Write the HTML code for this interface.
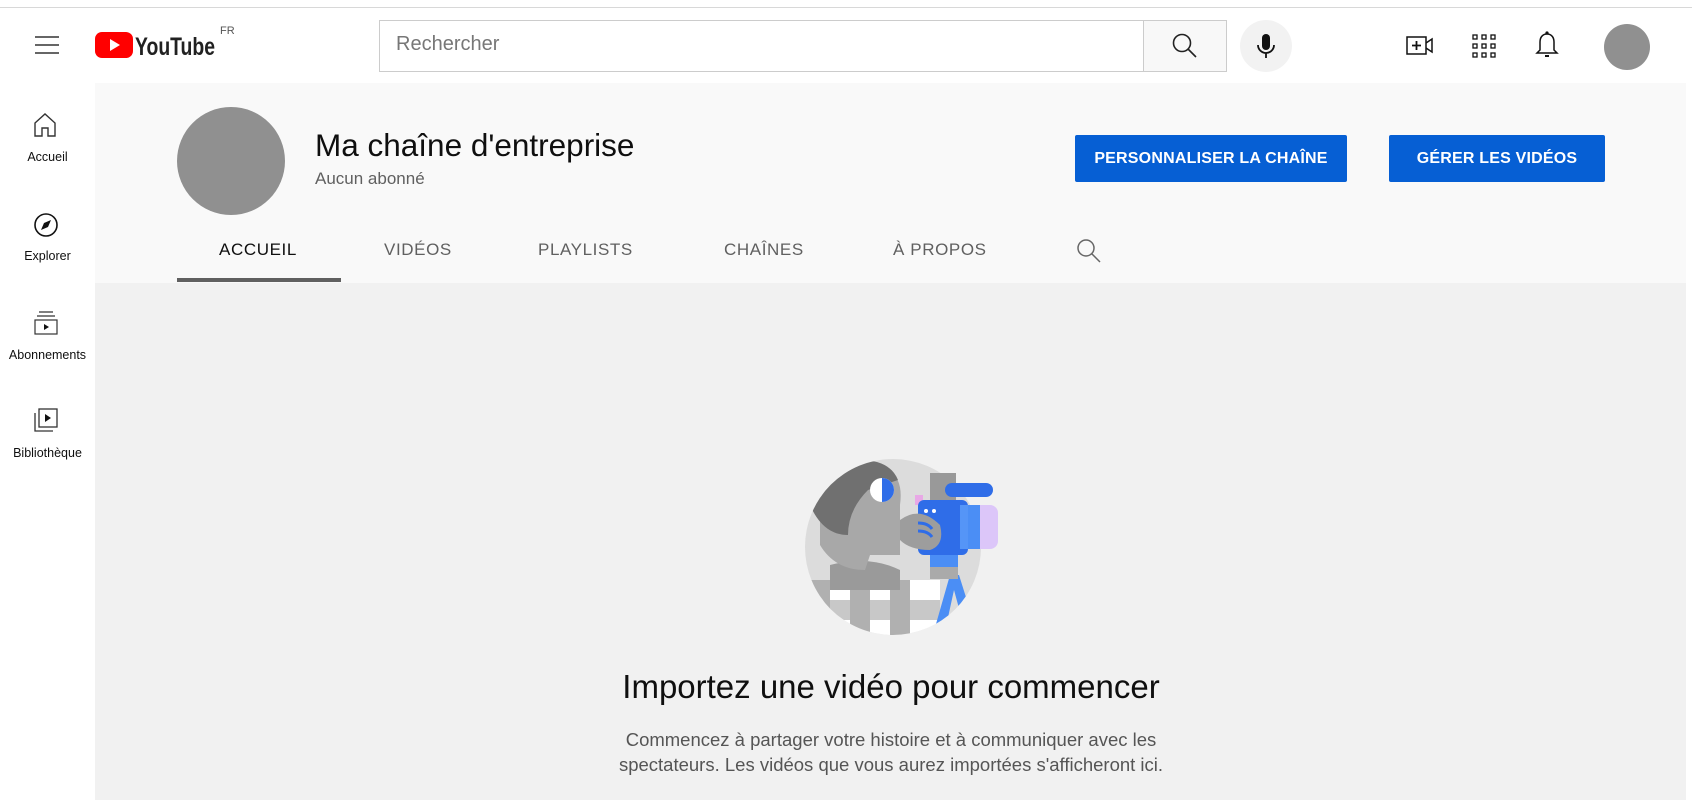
<!DOCTYPE html>
<html><head><meta charset="utf-8"><style>
*{margin:0;padding:0;box-sizing:border-box}
body{width:1692px;height:800px;overflow:hidden;background:#fff;font-family:"Liberation Sans",Arial,sans-serif;position:relative;color:#0f0f0f}
.abs{position:absolute}
.topline{left:0;top:7px;width:1692px;height:1px;background:#d8d8d8}
.main{left:95px;top:83px;width:1591px;height:717px;background:#f1f1f1}
.chead{left:95px;top:83px;width:1591px;height:200px;background:#f9f9f9}
.side{text-align:center;width:95px;left:0;font-size:12.5px;color:#0f0f0f}
.tab{top:240px;font-size:17px;letter-spacing:.6px;color:#606060;font-weight:500}
.btn{top:135px;height:47px;background:#065fd4;color:#fff;font-size:16px;font-weight:bold;letter-spacing:.2px;line-height:47px;text-align:center;border-radius:2px}
</style></head><body>
<div class="abs topline"></div>
<svg class="abs" style="left:34px;top:34px" width="26" height="22"><path d="M1 3h24M1 11h24M1 19h24" stroke="#333" stroke-width="1.6"/></svg>
<svg class="abs" style="left:95px;top:31px" width="125" height="28" viewBox="0 0 125 28">
<rect x="0" y="1" width="38" height="26" rx="7" fill="#f00"/>
<path d="M15 8v12l10-6z" fill="#fff"/>
<text x="40" y="24" font-family="Liberation Sans,sans-serif" font-size="25" font-weight="bold" textLength="80" lengthAdjust="spacingAndGlyphs" fill="#212121">YouTube</text>
</svg>
<div class="abs" style="left:220px;top:25px;font-size:11px;color:#555">FR</div>
<div class="abs" style="left:379px;top:20px;width:765px;height:52px;border:1px solid #ccc;border-right:none;background:#fff"></div>
<div class="abs" style="left:396px;top:33px;font-size:20px;color:#777">Rechercher</div>
<div class="abs" style="left:1143px;top:20px;width:84px;height:52px;border:1px solid #ccc;background:#f8f8f8"></div>
<svg class="abs" style="left:1171px;top:32px" width="28" height="28"><circle cx="11" cy="11" r="8.5" fill="none" stroke="#222" stroke-width="1.6"/><path d="M17 17l8 8" stroke="#222" stroke-width="1.6"/></svg>
<div class="abs" style="left:1240px;top:20px;width:52px;height:52px;border-radius:50%;background:#f2f2f2"></div>
<svg class="abs" style="left:1254px;top:33px" width="24" height="28"><rect x="8" y="1" width="8" height="16" rx="4" fill="#111"/><path d="M4 12a8 8 0 0 0 16 0M12 20v5" fill="none" stroke="#111" stroke-width="1.8"/></svg>
<svg class="abs" style="left:1406px;top:34px" width="30" height="24"><rect x="1" y="3" width="19" height="17" fill="none" stroke="#111" stroke-width="1.5"/><path d="M6 11.5h9M10.5 7v9" stroke="#111" stroke-width="1.8"/><path d="M20 9l6-4v13l-6-4" fill="none" stroke="#111" stroke-width="1.5"/></svg>
<svg class="abs" style="left:1472px;top:34px" width="24" height="24"><g fill="none" stroke="#111" stroke-width="1.3"><rect x="1" y="1" width="4" height="4"/><rect x="10" y="1" width="4" height="4"/><rect x="19" y="1" width="4" height="4"/><rect x="1" y="10" width="4" height="4"/><rect x="10" y="10" width="4" height="4"/><rect x="19" y="10" width="4" height="4"/><rect x="1" y="19" width="4" height="4"/><rect x="10" y="19" width="4" height="4"/><rect x="19" y="19" width="4" height="4"/></g></svg>
<svg class="abs" style="left:1535px;top:30px" width="24" height="30"><path d="M12 4c-5 0-7 4-7 8v8l-3 3h20l-3-3v-8c0-4-2-8-7-8z" fill="none" stroke="#111" stroke-width="1.5"/><circle cx="12" cy="3" r="1.6" fill="#111"/><path d="M10 25h4v2h-4z" fill="#111"/></svg>
<div class="abs" style="left:1604px;top:24px;width:46px;height:46px;border-radius:50%;background:#909090"></div>
<svg class="abs" style="left:33px;top:112px" width="24" height="26"><path d="M2 11L12 2l10 9v13h-7v-8h-6v8H2z" fill="none" stroke="#333" stroke-width="1.4"/></svg>
<div class="abs side" style="top:150px">Accueil</div>
<svg class="abs" style="left:33px;top:212px" width="26" height="26"><circle cx="13" cy="13" r="11" fill="none" stroke="#111" stroke-width="1.6"/><path d="M18 8l-7 3-3 7 7-3z" fill="#111"/></svg>
<div class="abs side" style="top:249px">Explorer</div>
<svg class="abs" style="left:33px;top:310px" width="26" height="26"><path d="M6 2h14M4 6h18" stroke="#333" stroke-width="1.2"/><rect x="2" y="10" width="22" height="14" fill="none" stroke="#333" stroke-width="1.2"/><path d="M11 14v6l5-3z" fill="#111"/></svg>
<div class="abs side" style="top:348px">Abonnements</div>
<svg class="abs" style="left:33px;top:407px" width="26" height="26"><path d="M2 6v18h18" fill="none" stroke="#333" stroke-width="1.3"/><rect x="6" y="2" width="18" height="18" fill="none" stroke="#333" stroke-width="1.3"/><path d="M12 7v8l6-4z" fill="#111"/></svg>
<div class="abs side" style="top:446px">Bibliothèque</div>
<div class="abs main"></div>
<div class="abs chead"></div>
<div class="abs" style="left:177px;top:107px;width:108px;height:108px;border-radius:50%;background:#909090"></div>
<div class="abs" style="left:315px;top:127px;font-size:31.5px;color:#0f0f0f">Ma chaîne d'entreprise</div>
<div class="abs" style="left:315px;top:169px;font-size:17px;color:#606060">Aucun abonné</div>
<div class="abs btn" style="left:1075px;width:272px">PERSONNALISER LA CHAÎNE</div>
<div class="abs btn" style="left:1389px;width:216px">GÉRER LES VIDÉOS</div>
<div class="abs tab" style="left:219px;color:#0f0f0f">ACCUEIL</div>
<div class="abs tab" style="left:384px">VIDÉOS</div>
<div class="abs tab" style="left:538px">PLAYLISTS</div>
<div class="abs tab" style="left:724px">CHAÎNES</div>
<div class="abs tab" style="left:893px">À PROPOS</div>
<svg class="abs" style="left:1076px;top:238px" width="26" height="26"><circle cx="10" cy="10" r="8" fill="none" stroke="#666" stroke-width="1.5"/><path d="M16 16l8 8" stroke="#666" stroke-width="1.5"/></svg>
<div class="abs" style="left:177px;top:278px;width:164px;height:4px;background:#606060"></div>
<svg class="abs" style="left:800px;top:445px" width="220" height="200" viewBox="0 0 220 200">
<defs><clipPath id="c"><circle cx="93" cy="102" r="88"/></clipPath></defs>
<circle cx="93" cy="102" r="88" fill="#dcdcdc"/>
<g clip-path="url(#c)">
<rect x="0" y="135" width="140" height="70" fill="#fff"/>
<g fill="#b0b0b0"><rect x="10" y="135" width="20" height="70"/><rect x="50" y="135" width="20" height="70"/><rect x="90" y="135" width="20" height="70"/><rect x="0" y="155" width="140" height="20" opacity=".7"/></g>
<path d="M30 120 q40 -10 70 5 v20 h-70z" fill="#9a9a9a"/>
<path d="M20 60 q5 -45 55 -40 q30 5 25 40 v50 h-30 l-5 15 q-30 0 -45 -25z" fill="#a8a8a8"/>
<path d="M10 60 q0 -45 50 -45 q30 0 38 20 l-30 10 q-20 20 -20 45 q-25 0 -38 -30z" fill="#707070"/>
<circle cx="82" cy="45" r="12" fill="#fff"/><path d="M82 33a12 12 0 0 1 0 24z" fill="#2f6de8"/>
<path d="M150 130 l-20 70 h12 l12 -55 l15 55 h12 l-22 -70z" fill="#4b8ef5"/>
</g>
<rect x="130" y="120" width="28" height="14" fill="#aaa"/>
<rect x="130" y="110" width="28" height="12" fill="#4b8ef5"/>
<rect x="130" y="28" width="26" height="28" fill="#999"/>
<rect x="145" y="38" width="48" height="14" rx="7" fill="#2f6de8"/>
<rect x="115" y="50" width="8" height="10" fill="#e8a8e6"/>
<rect x="118" y="55" width="50" height="55" rx="6" fill="#2f6de8"/>
<rect x="160" y="60" width="18" height="44" fill="#5595f7"/>
<rect x="170" y="60" width="28" height="44" rx="8" fill="#dcc6f9"/>
<rect x="168" y="60" width="12" height="44" fill="#4b8ef5"/>
<circle cx="126" cy="66" r="2" fill="#fff"/><circle cx="134" cy="66" r="2" fill="#fff"/>
<path d="M100 75 q20 -15 40 5 q5 20 -10 25 q-20 0 -30 -10z" fill="#9d9d9d"/>
<path d="M118 78q10 0 14 6M118 86q10 0 14 6" stroke="#2f6de8" stroke-width="3" fill="none"/>
</svg>
<div class="abs" style="left:0;width:1782px;top:668px;text-align:center;font-size:33px;color:#0f0f0f">Importez une vidéo pour commencer</div>
<div class="abs" style="left:0;width:1782px;top:727px;text-align:center;font-size:18.5px;line-height:25px;color:#555">Commencez à partager votre histoire et à communiquer avec les<br>spectateurs. Les vidéos que vous aurez importées s'afficheront ici.</div>
</body></html>
